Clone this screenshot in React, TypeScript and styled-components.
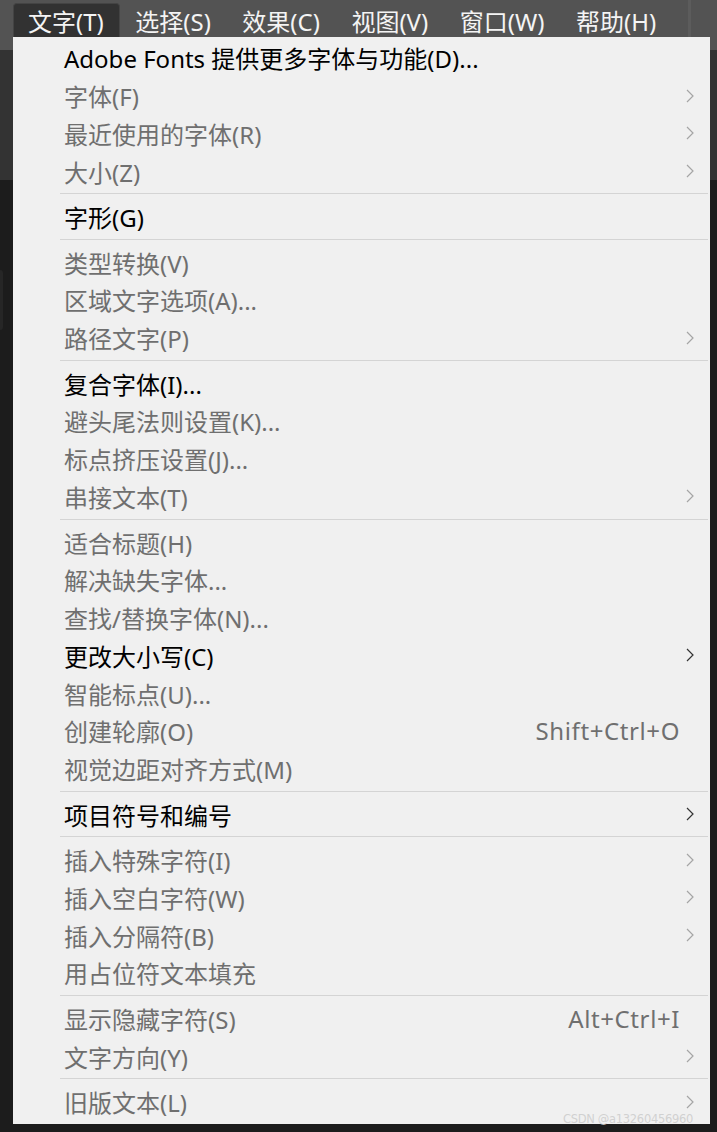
import React from "react";
import styled, { createGlobalStyle } from "styled-components";

const Global = createGlobalStyle`
  html, body { margin: 0; padding: 0; background: #1c1c1c; }
  body { font-family: "Noto Sans", "Noto Sans CJK SC", sans-serif; }
`;

const Page = styled.div`
  position: relative;
  width: 717px;
  height: 1132px;
  overflow: hidden;
  background: #1c1c1c;
  display: flex;
  flex-direction: column;
`;

const MenuBar = styled.div`
  height: 50px;
  background: #535353;
  display: flex;
  align-items: flex-start;
  padding-left: 13px;
  box-sizing: border-box;
`;

const BarItem = styled.div<{ $active?: boolean }>`
  height: 34px;
  margin-top: 3px;
  padding: 0 15.5px 0 14px;
  display: flex;
  align-items: center;
  font-size: 24px;
  color: #f4f4f4;
  box-sizing: border-box;
  border-radius: 4px 4px 0 0;
  background: ${(p) => (p.$active ? "#323232" : "transparent")};
  border: 1px solid ${(p) => (p.$active ? "#444" : "transparent")};
  border-bottom: none;
`;

const BarDivider = styled.div`
  width: 3px;
  height: 37px;
  background: #5c5c5c;
  margin-left: auto;
  margin-right: 26px;
`;

const Toolbar = styled.div`
  height: 130px;
  background: #333333;
`;

const Workspace = styled.div`
  flex: 1;
  background: #1c1c1c;
`;

const SideTab = styled.div`
  width: 3px;
  height: 60px;
  margin-top: 90px;
  background: #262626;
  border-radius: 0 4px 4px 0;
`;

const Dropdown = styled.div`
  position: absolute;
  top: 37px;
  left: 13px;
  width: 697px;
  height: 1087px;
  background: #f0f0f0;
  box-sizing: border-box;
  padding-top: 2px;
  display: flex;
  flex-direction: column;
`;

const Row = styled.div<{ $enabled?: boolean }>`
  height: 37.75px;
  flex: none;
  display: flex;
  align-items: center;
  padding-left: 51px;
  padding-right: 16px;
  font-size: 24px;
  color: ${(p) => (p.$enabled ? "#000000" : "#6f6f6f")};
  white-space: nowrap;
`;

const Label = styled.span`
  flex: 1;
`;

const Shortcut = styled.span`
  color: #6f6f6f;
  margin-right: 14px;
  letter-spacing: 0.6px;
`;

const Chevron = styled.svg<{ $enabled?: boolean }>`
  width: 8px;
  height: 14px;
  color: ${(p) => (p.$enabled ? "#333" : "#a5a5a5")};
`;

const Separator = styled.div`
  height: 1px;
  flex: none;
  background: #d4d4d4;
  margin: 3.4px 2px 3.4px 47px;
`;

const Watermark = styled.div`
  position: absolute;
  right: 24px;
  bottom: 6px;
  font-family: "DejaVu Sans", sans-serif;
  font-size: 11.5px;
  color: rgba(205, 205, 205, 0.9);
  letter-spacing: -0.3px;
`;

type Item = { label: string; enabled?: boolean; sub?: boolean; shortcut?: string } | "sep";

const items: Item[] = [
  { label: "Adobe Fonts 提供更多字体与功能(D)...", enabled: true },
  { label: "字体(F)", sub: true },
  { label: "最近使用的字体(R)", sub: true },
  { label: "大小(Z)", sub: true },
  "sep",
  { label: "字形(G)", enabled: true },
  "sep",
  { label: "类型转换(V)" },
  { label: "区域文字选项(A)..." },
  { label: "路径文字(P)", sub: true },
  "sep",
  { label: "复合字体(I)...", enabled: true },
  { label: "避头尾法则设置(K)..." },
  { label: "标点挤压设置(J)..." },
  { label: "串接文本(T)", sub: true },
  "sep",
  { label: "适合标题(H)" },
  { label: "解决缺失字体..." },
  { label: "查找/替换字体(N)..." },
  { label: "更改大小写(C)", enabled: true, sub: true },
  { label: "智能标点(U)..." },
  { label: "创建轮廓(O)", shortcut: "Shift+Ctrl+O" },
  { label: "视觉边距对齐方式(M)" },
  "sep",
  { label: "项目符号和编号", enabled: true, sub: true },
  "sep",
  { label: "插入特殊字符(I)", sub: true },
  { label: "插入空白字符(W)", sub: true },
  { label: "插入分隔符(B)", sub: true },
  { label: "用占位符文本填充" },
  "sep",
  { label: "显示隐藏字符(S)", shortcut: "Alt+Ctrl+I" },
  { label: "文字方向(Y)", sub: true },
  "sep",
  { label: "旧版文本(L)", sub: true },
];

const bar = ["文字(T)", "选择(S)", "效果(C)", "视图(V)", "窗口(W)", "帮助(H)"];

export default function App() {
  return (
    <Page>
      <Global />
      <MenuBar>
        {bar.map((b, i) => (
          <BarItem key={b} $active={i === 0}>
            {b}
          </BarItem>
        ))}
        <BarDivider />
      </MenuBar>
      <Toolbar />
      <Workspace>
        <SideTab />
      </Workspace>
      <Dropdown>
        {items.map((it, i) =>
          it === "sep" ? (
            <Separator key={i} />
          ) : (
            <Row key={i} $enabled={it.enabled}>
              <Label>{it.label}</Label>
              {it.shortcut && <Shortcut>{it.shortcut}</Shortcut>}
              {it.sub && (
                <Chevron $enabled={it.enabled} viewBox="0 0 8 14">
                  <path d="M1 1 L7 7 L1 13" fill="none" stroke="currentColor" strokeWidth="1.2" />
                </Chevron>
              )}
            </Row>
          )
        )}
      </Dropdown>
      <Watermark>CSDN @a13260456960</Watermark>
    </Page>
  );
}
